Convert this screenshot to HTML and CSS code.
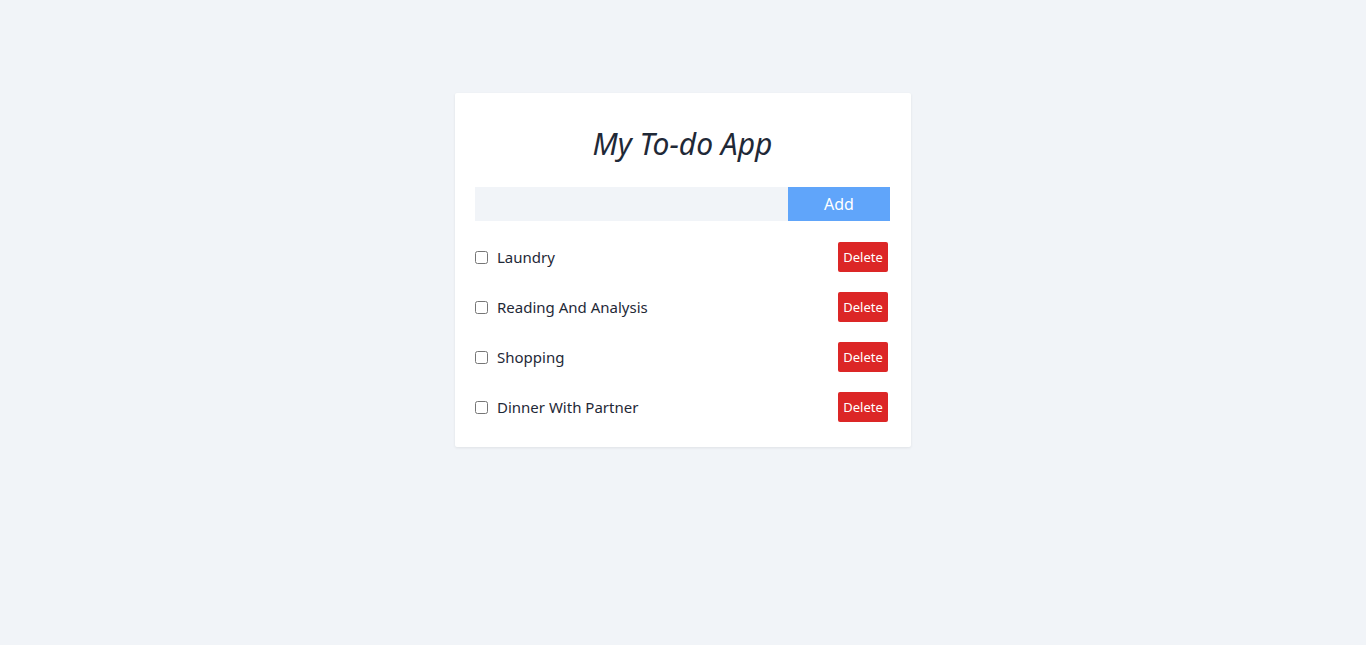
FILE: index.html
```html
<!DOCTYPE html>
<html lang="en">
<head>
<meta charset="utf-8">
<title>My To-do App</title>
<link rel="stylesheet" href="styles.css">
</head>
<body>
<main class="card">
  <h1 class="title">My To-do App</h1>
  <form class="add-row">
    <input class="add-input" type="text">
    <button class="add-btn" type="button">Add</button>
  </form>
  <ul class="list">
    <li class="item"><label class="item-label"><input type="checkbox" class="check"><span class="item-text">Laundry</span></label><button class="del" type="button">Delete</button></li>
    <li class="item"><label class="item-label"><input type="checkbox" class="check"><span class="item-text">Reading And Analysis</span></label><button class="del" type="button">Delete</button></li>
    <li class="item"><label class="item-label"><input type="checkbox" class="check"><span class="item-text">Shopping</span></label><button class="del" type="button">Delete</button></li>
    <li class="item"><label class="item-label"><input type="checkbox" class="check"><span class="item-text">Dinner With Partner</span></label><button class="del" type="button">Delete</button></li>
  </ul>
</main>
</body>
</html>
```
FILE: styles.css
```css
html, body {
  margin: 0;
  padding: 0;
}
body {
  background: #f1f4f8;
  font-family: "Noto Sans", "Open Sans", sans-serif;
  color: #1f2937;
  min-height: 645px;
  display: flex;
  justify-content: center;
  align-items: flex-start;
}
.card {
  margin-top: 93px;
  width: 456px;
  box-sizing: border-box;
  background: #ffffff;
  padding: 20px 21px 20px 20px;
  box-shadow: 0 1px 3px rgba(0, 0, 0, 0.08);
  border-radius: 2px;
}
.title {
  margin: 13px 0 25px;
  text-align: center;
  font-size: 30px;
  line-height: 36px;
  font-style: italic;
  font-weight: 400;
}
.add-row {
  display: flex;
  margin: 0;
  height: 34px;
}
.add-input {
  flex: 1;
  border: none;
  background: #f1f4f8;
  outline: none;
  margin: 0;
  padding: 0 8px;
  font: inherit;
}
.add-btn {
  width: 102px;
  border: none;
  background: #60a5fa;
  color: #ffffff;
  font-family: inherit;
  font-size: 16px;
  margin: 0;
  cursor: pointer;
}
.list {
  list-style: none;
  margin: 21px 0 0;
  padding: 0 2px 5px 0;
  display: flex;
  flex-direction: column;
  gap: 20px;
}
.item {
  height: 30px;
  display: flex;
  align-items: center;
  justify-content: space-between;
}
.item-label {
  display: flex;
  align-items: center;
}
.check {
  width: 13px;
  height: 13px;
  margin: 0;
}
.item-text {
  margin-left: 9px;
  font-size: 15px;
}
.del {
  width: 50px;
  height: 30px;
  border: none;
  border-radius: 2px;
  background: #dc2626;
  color: #ffffff;
  font-family: inherit;
  font-size: 13px;
  padding: 0;
  cursor: pointer;
}
```
